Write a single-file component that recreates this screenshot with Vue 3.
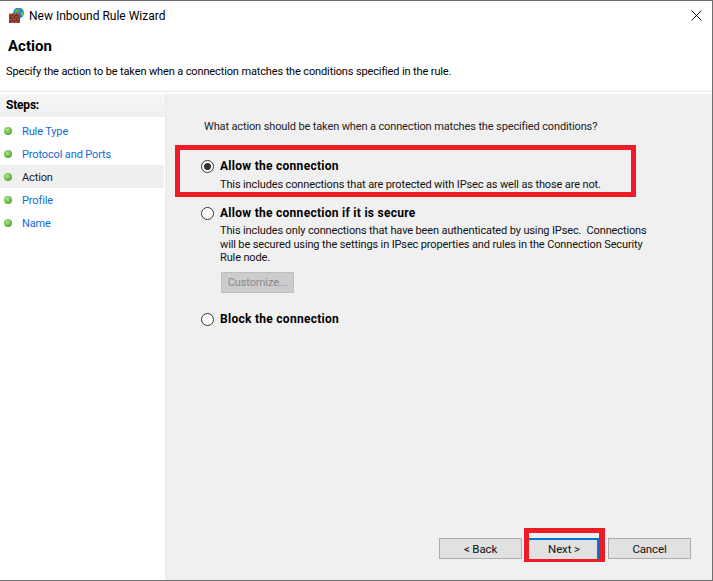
<script setup>
const steps = [
  { label: 'Rule Type' },
  { label: 'Protocol and Ports' },
  { label: 'Action', active: true },
  { label: 'Profile' },
  { label: 'Name' },
]
</script>

<template>
  <div class="window">
    <div class="titlebar">
      <svg class="app-icon" width="16" height="16" viewBox="0 0 16 16">
        <circle cx="10.5" cy="5" r="5.500" fill="#2f86cf" />
        <path d="M7.500 1.500c1.500-1 3.500-1.200 5-.3l-1 2.300-2 .5-.5 2-2.500-1.500z" fill="#58ad45" />
        <path d="M12.500 4.500l3-.5c.3 1.800-.4 3.500-1.500 4.500z" fill="#6dbb55" />
        <rect x="1" y="5.500" width="11" height="9.500" fill="#a84e36" />
        <path d="M1 7.800h11M1 10.200h11M1 12.600h11M4.500 5.500v2.300M8.500 5.500v2.300M2.500 7.800v2.400M6.500 7.800v2.400M10.500 7.800v2.400M4.500 10.200v2.400M8.500 10.200v2.400M2.500 12.600V15M6.500 12.600V15M10.500 12.600V15" stroke="#6e2c1c" stroke-width=".8" fill="none" />
      </svg>
      <span class="title">New Inbound Rule Wizard</span>
      <svg class="close" width="11" height="11" viewBox="0 0 11 11">
        <path d="M.5.5l10 10M10.500.5l-10 10" stroke="#111" stroke-width="1" fill="none" />
      </svg>
    </div>
    <div class="header">
      <h1>Action</h1>
      <p>Specify the action to be taken when a connection matches the conditions specified in the rule.</p>
    </div>
    <div class="body">
      <aside class="sidebar">
        <div class="steps-head">Steps:</div>
        <ul>
          <li v-for="s in steps" :key="s.label" :class="{ active: s.active }">
            <span class="dot"></span>
            <span class="step-label">{{ s.label }}</span>
          </li>
        </ul>
      </aside>
      <main class="panel">
        <p class="question">What action should be taken when a connection matches the specified conditions?</p>
        <div class="options">
          <div class="option first">
            <span class="radio checked"></span>
            <div class="opt-text">
              <div class="opt-title">Allow the connection</div>
              <div class="opt-desc">This includes connections that are protected with IPsec as well as those are not.</div>
            </div>
          </div>
          <div class="option second">
            <span class="radio"></span>
            <div class="opt-text">
              <div class="opt-title">Allow the connection if it is secure</div>
              <div class="opt-desc tight">This includes only connections that have been authenticated by using IPsec.&nbsp; Connections<br />will be secured using the settings in IPsec properties and rules in the Connection Security<br />Rule node.</div>
              <button class="customize" disabled>Customize...</button>
            </div>
          </div>
          <div class="option third">
            <span class="radio"></span>
            <div class="opt-text">
              <div class="opt-title">Block the connection</div>
            </div>
          </div>
        </div>
        <div class="buttons">
          <button class="btn back">&lt; Back</button>
          <button class="btn next">Next &gt;</button>
          <button class="btn cancel">Cancel</button>
        </div>
      </main>
    </div>
    <div class="mark mark-option"></div>
    <div class="mark mark-next"></div>
  </div>
</template>

<style>
html, body { margin: 0; background: #fff; }
</style>

<style scoped>
.window {
  position: relative;
  width: 713px;
  height: 581px;
  box-sizing: border-box;
  display: flex;
  flex-direction: column;
  background: #fff;
  border-top: 1px solid #6f6f6f;
  border-right: 1px solid #6f6f6f;
  border-bottom: 1px solid #6f6f6f;
  font-family: Roboto, "Liberation Sans", sans-serif;
  font-size: 11px;
  letter-spacing: -0.13px;
  color: #000;
  overflow: hidden;
}
.titlebar {
  height: 29px;
  flex: none;
  display: flex;
  align-items: center;
  padding: 0 10px 0 8px;
}
.app-icon { flex: none; margin-right: 5px; }
.title { font-size: 12px; letter-spacing: 0; flex: 1; }
.header {
  height: 62px;
  flex: none;
  box-sizing: border-box;
  padding-top: 7px;
  border-bottom: 1px solid #e6e6e6;
}
.header h1 {
  margin: 0 0 0 8px;
  font-size: 15px;
  line-height: 18px;
  font-weight: 700;
  letter-spacing: 0;
}
.header p {
  margin: 9px 0 0 6px;
  line-height: 15px;
}
.body {
  flex: 1;
  display: flex;
  margin-top: 2px;
  min-height: 0;
}
.sidebar {
  width: 167px;
  flex: none;
  box-sizing: border-box;
  border-right: 2px solid #ececec;
}
.steps-head {
  height: 23px;
  line-height: 23px;
  padding-left: 6px;
  font-size: 12px;
  font-weight: 700;
  letter-spacing: -0.2px;
  background: linear-gradient(#f6f6f6, #efefef);
}
ul { list-style: none; margin: 2px 0 0; padding: 0; }
li {
  height: 23px;
  display: flex;
  align-items: center;
  padding-left: 4px;
  color: #0f6ad0;
  margin-right: 1px;
}
li.active { background: #efefef; color: #222; }
.step-label { padding-top: 2px; }
.dot {
  width: 8px;
  height: 8px;
  border-radius: 50%;
  margin-right: 10px;
  background: radial-gradient(circle at 40% 35%, #b4e38f, #52ad33 70%);
}
.panel {
  flex: 1;
  display: flex;
  flex-direction: column;
  background: #f0f0f0;
  box-sizing: border-box;
  padding: 25px 21px 21px 37px;
}
.question { margin: 0; line-height: 15px; color: #222; }
.options { margin-top: 25px; flex: 1; }
.option { display: flex; align-items: flex-start; }
.second { margin-top: 15px; }
.third { margin-top: 19px; }
.radio {
  flex: none;
  width: 13px;
  height: 13px;
  margin-top: 1px;
  margin-left: -3px;
  border: 1px solid #333;
  border-radius: 50%;
  background: #fff;
  box-sizing: border-box;
  position: relative;
}
.radio.checked::after {
  content: "";
  position: absolute;
  left: 2px;
  top: 2px;
  width: 7px;
  height: 7px;
  border-radius: 50%;
  background: #333;
}
.opt-text { margin-left: 6px; }
.opt-title { font-size: 12px; font-weight: 700; line-height: 15px; letter-spacing: 0.28px; }
.opt-desc { margin-top: 4px; line-height: 13px; color: #111; white-space: nowrap; }
.opt-desc.tight { margin-top: 3px; line-height: 13.500px; }
.customize {
  display: block;
  margin: 7px 0 0 1px;
  width: 73px;
  height: 21px;
  padding: 0;
  background: #cccccc;
  border: 1px solid #bfbfbf;
  color: #8a8a8a;
  font: inherit;
  letter-spacing: inherit;
}
.buttons { display: flex; justify-content: flex-end; }
.btn {
  width: 83px;
  height: 21px;
  padding: 0;
  background: #e1e1e1;
  border: 1px solid #adadad;
  color: #111;
  font: inherit;
  font-size: 11.500px;
  letter-spacing: inherit;
  box-sizing: border-box;
}
.back { margin-right: 7px; }
.next {
  width: 70px;
  margin-right: 9px;
  padding: 0 0 2px 2px;
  border: 2px solid #0078d7;
  border-left: 0;
  border-bottom: 0;
}
.mark { position: absolute; border: 5px solid #ed1c24; box-sizing: border-box; pointer-events: none; }
.mark-option { left: 175px; top: 144px; width: 461px; height: 52px; }
.mark-next { left: 524px; top: 527px; width: 81px; height: 34px; border-width: 5px 6px 3px 5px; }
</style>
